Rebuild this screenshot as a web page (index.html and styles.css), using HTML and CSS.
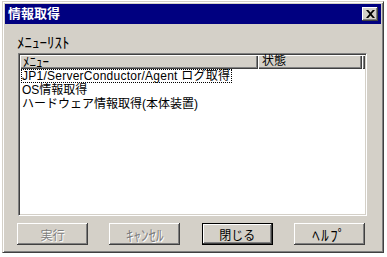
FILE: index.html
```html
<!DOCTYPE html>
<html lang="ja">
<head>
    <meta charset="UTF-8">
    <title>情報取得</title>
    <link rel="stylesheet" href="styles.css">
</head>
<body>
    <div class="window">
        <div class="title-bar">
            <span class="title">情報取得</span>
            <button class="close-button">
                <svg width="9" height="8" viewBox="0 0 9 8">
                    <path d="M0 0h2.2L4.5 2.6 6.8 0H9L5.6 4 9 8H6.8L4.5 5.4 2.2 8H0l3.4-4z" fill="#000"/>
                </svg>
            </button>
        </div>
        <div class="content">
            <div class="group-label"><span class="hankaku">ﾒﾆｭｰﾘｽﾄ</span></div>
            <div class="list-view">
                <div class="header">
                    <div class="col col-menu"><span class="hankaku small">ﾒﾆｭｰ</span></div>
                    <div class="col col-state">状態</div>
                    <div class="col col-fill"></div>
                </div>
                <div class="row"><span class="focus">JP1/ServerConductor/Agent ログ取得</span></div>
                <div class="row"><span class="item">OS情報取得</span></div>
                <div class="row"><span class="item">ハードウェア情報取得(本体装置)</span></div>
            </div>
            <div class="buttons">
                <button class="push-button" disabled>実行</button>
                <button class="push-button" disabled><span class="hankaku">ｷｬﾝｾﾙ</span></button>
                <button class="push-button default">閉じる</button>
                <button class="push-button"><span class="hankaku wide">ﾍﾙﾌﾟ</span></button>
            </div>
        </div>
    </div>
</body>
</html>
```

FILE: styles.css
```css
body {
    margin: 0;
    background-color: #fff;
    font-family: "Liberation Sans", "Noto Sans CJK JP", sans-serif;
    font-size: 12px;
    color: #000;
}

.window {
    box-sizing: border-box;
    width: 382px;
    height: 252px;
    margin: 1px 0 0 2px;
    padding: 2px;
    background-color: #d4d0c8;
    border: 1px solid;
    border-color: #d4d0c8 #404040 #404040 #d4d0c8;
    box-shadow: inset 1px 1px #fff, inset -1px -1px #808080;
}

.title-bar {
    display: flex;
    align-items: center;
    justify-content: space-between;
    height: 20px;
    padding: 0 2px 0 3px;
    background-color: #000080;
}

.title {
    color: #fff;
    font-size: 13px;
    font-weight: bold;
    line-height: 20px;
}

.close-button {
    display: flex;
    align-items: center;
    justify-content: center;
    width: 16px;
    height: 14px;
    padding: 0;
    margin-right: 1px;
    background-color: #d4d0c8;
    border: none;
    box-shadow: inset -1px -1px #404040, inset 1px 1px #fff, inset -2px -2px #808080;
}

.content {
    padding: 12px 0 0 12px;
}

.group-label {
    line-height: 14px;
    height: 14px;
}

.hankaku {
    font-size: 15px;
}

.hankaku.small {
    font-size: 13px;
}

.hankaku.wide {
    letter-spacing: 1.5px;
}

.list-view {
    box-sizing: border-box;
    width: 349px;
    height: 163px;
    margin: 3px 0 0 1px;
    padding: 1px;
    background-color: #fff;
    border: 1px solid;
    border-color: #808080 #fff #fff #808080;
    box-shadow: inset 1px 1px #404040, inset -1px -1px #d4d0c8;
}

.header {
    display: flex;
    height: 14px;
}

.col {
    box-sizing: border-box;
    height: 14px;
    line-height: 13px;
    padding-left: 3px;
    background-color: #d4d0c8;
    box-shadow: inset 1px 1px #fff, inset -1px -1px #404040, inset -2px -2px #808080;
}

.col-menu {
    width: 238px;
}

.col-state {
    width: 104px;
    padding-left: 4px;
}

.col-fill {
    flex: 1;
}

.row {
    height: 14px;
    line-height: 14px;
    padding-left: 1px;
}

.focus {
    display: inline-block;
    box-sizing: border-box;
    height: 14px;
    line-height: 12px;
    border: 1px dotted #000;
    padding: 0 1px 0 0;
    letter-spacing: 0.25px;
}

.item {
    display: inline-block;
    padding-left: 1px;
}

.buttons {
    display: flex;
    justify-content: space-between;
    width: 348px;
    margin-top: 7px;
}

.push-button {
    width: 71px;
    height: 22px;
    padding: 0;
    font-family: inherit;
    font-size: 12px;
    color: #000;
    background-color: #d4d0c8;
    border: none;
    box-shadow: inset -1px -1px #404040, inset 1px 1px #fff, inset -2px -2px #808080;
}

.push-button:disabled {
    color: #808080;
    text-shadow: 1px 1px #fff;
}

.push-button.default {
    box-shadow: inset 0 0 0 1px #000, inset -2px -2px #404040, inset 2px 2px #fff, inset -3px -3px #808080;
}
```
